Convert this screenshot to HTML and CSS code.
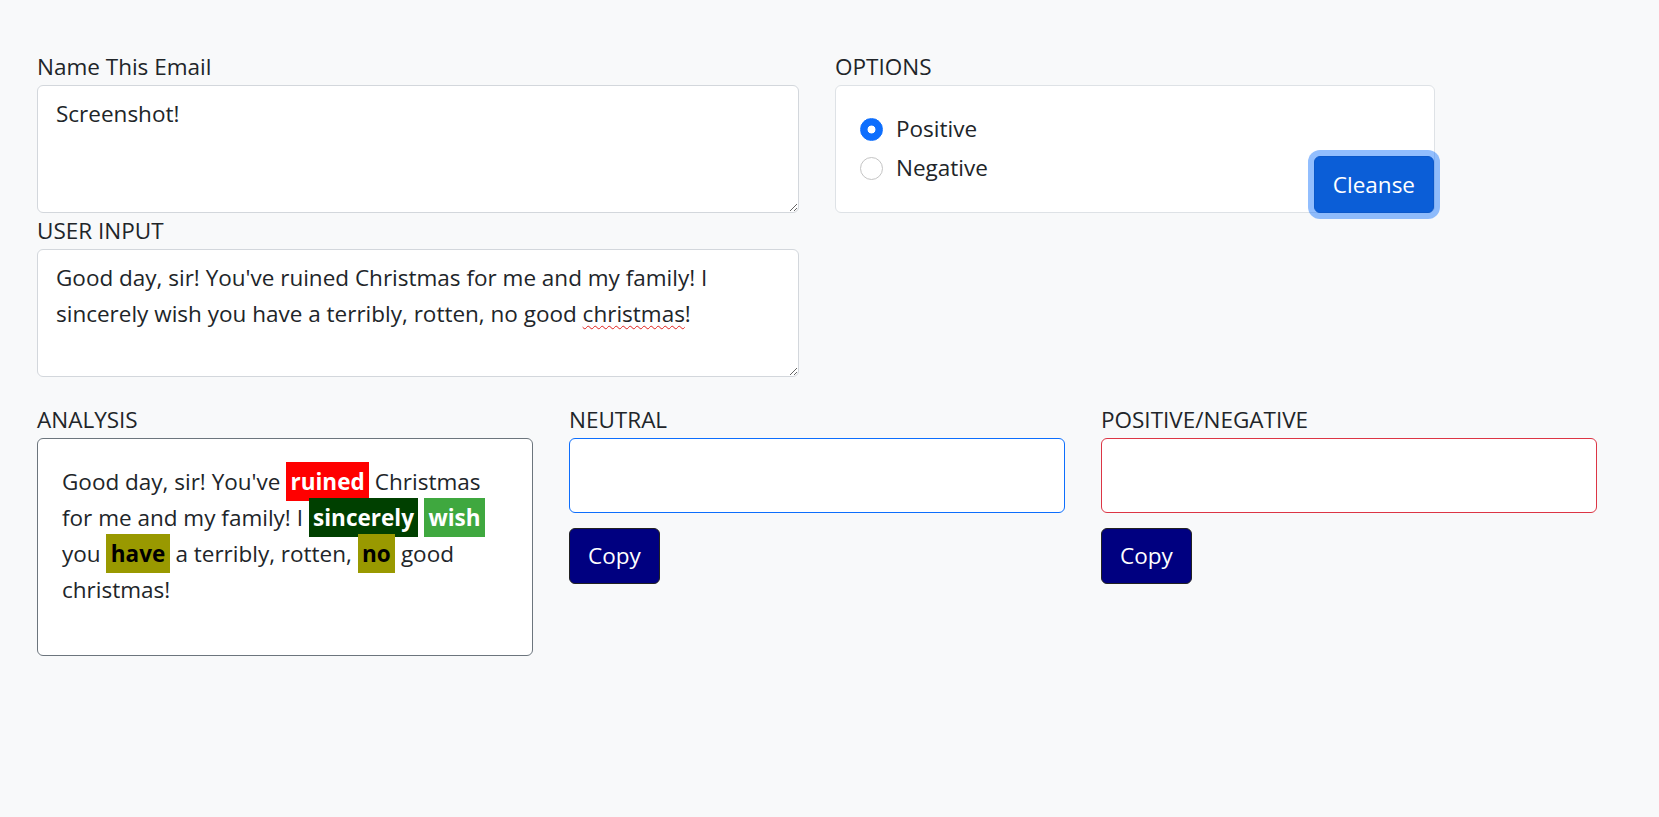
FILE: index.html
```html
<!DOCTYPE html>
<html lang="en">
<head>
<meta charset="utf-8">
<title>Email Cleanser</title>
<link rel="stylesheet" href="styles.css">
</head>
<body>
<main class="page">
  <section class="top-row">
    <div class="col-main">
      <label class="field-label" for="email-name">Name This Email</label>
      <textarea id="email-name" class="text-box" rows="3">Screenshot!</textarea>
      <label class="field-label">USER INPUT</label>
      <div class="text-box text-box-div" role="textbox">Good day, sir! You've ruined Christmas for me and my family! I sincerely wish you have a terribly, rotten, no good <span class="misspelled">christmas</span>!</div>
    </div>
    <div class="col-options">
      <div class="field-label">OPTIONS</div>
      <div class="options-card">
        <label class="radio-row"><span class="radio radio-checked"></span>Positive</label>
        <label class="radio-row"><span class="radio"></span>Negative</label>
        <button class="btn-cleanse" type="button">Cleanse</button>
      </div>
    </div>
  </section>

  <section class="bottom-row">
    <div class="col-third">
      <div class="field-label">ANALYSIS</div>
      <div class="analysis-box">
        <p class="analysis-text">Good day, sir! You've <mark class="hl hl-red">ruined</mark> Christmas for me and my family! I <mark class="hl hl-darkgreen">sincerely</mark> <mark class="hl hl-green">wish</mark> you <mark class="hl hl-olive">have</mark> a terribly, rotten, <mark class="hl hl-olive">no</mark> good christmas!</p>
      </div>
    </div>
    <div class="col-third">
      <div class="field-label">NEUTRAL</div>
      <div class="output-box output-neutral"></div>
      <button class="btn-copy" type="button">Copy</button>
    </div>
    <div class="col-third">
      <div class="field-label">POSITIVE/NEGATIVE</div>
      <div class="output-box output-polar"></div>
      <button class="btn-copy" type="button">Copy</button>
    </div>
  </section>
</main>
</body>
</html>
```

FILE: styles.css
```css
* {
  box-sizing: border-box;
}

html, body {
  margin: 0;
  background: #f8f9fa;
}

body {
  font-family: "Open Sans", "Noto Sans", sans-serif;
  font-size: 22.5px;
  line-height: 36px;
  color: #212529;
}

.page {
  padding: 49px 0 0 37px;
}

.top-row {
  display: flex;
  gap: 36px;
  align-items: flex-start;
}

.col-main {
  width: 762px;
}

.col-options {
  width: 600px;
}

.field-label {
  display: block;
  height: 36px;
  line-height: 36px;
}

.text-box {
  display: block;
  width: 100%;
  height: 128px;
  margin: 0;
  padding: 10px 18px 8px;
  font-family: inherit;
  font-size: 22.5px;
  line-height: 36px;
  color: #212529;
  background: #fff;
  border: 1px solid #d3d7dc;
  border-radius: 6px;
  resize: vertical;
  overflow: auto;
}

.misspelled {
  text-decoration: underline wavy #e0201c;
  text-decoration-thickness: 1px;
  text-underline-offset: 3px;
}

.options-card {
  position: relative;
  height: 128px;
  padding: 25px 24px 24px;
  background: #fff;
  border: 1px solid #dee2e6;
  border-radius: 6px;
}

.radio-row {
  display: flex;
  align-items: flex-start;
  gap: 13px;
  margin-bottom: 3px;
  line-height: 36px;
}

.radio {
  flex: none;
  width: 23px;
  height: 23px;
  margin-top: 6.5px;
  border: 1.5px solid #c4c4c4;
  border-radius: 50%;
  background: #fff;
}

.radio-checked {
  border-color: #0d6efd;
  background: radial-gradient(circle, #fff 0 3.6px, #0d6efd 4.3px);
}

.btn-cleanse {
  position: absolute;
  right: 0;
  bottom: -1px;
  height: 57px;
  padding: 9px 18px;
  font-family: inherit;
  font-size: 22.5px;
  line-height: 36px;
  color: #fff;
  background: #0b5ed7;
  border: 1px solid #0a58ca;
  border-radius: 6px;
  box-shadow: 0 0 0 6px rgba(13, 110, 253, 0.45);
}

.bottom-row {
  display: flex;
  gap: 36px;
  margin-top: 25px;
  align-items: flex-start;
}

.col-third {
  width: 496px;
}

.analysis-box {
  padding: 25px 24px 23px;
  background: #fff;
  border: 1px solid #6c757d;
  border-radius: 6px;
}

.analysis-text {
  margin: 0 0 24px;
  line-height: 36px;
}

.hl {
  padding: 4.3px;
  font-weight: 700;
}

.hl-red {
  background: #ff0000;
  color: #fff;
}

.hl-darkgreen {
  background: #004000;
  color: #fff;
}

.hl-green {
  background: #3fa83f;
  color: #fff;
}

.hl-olive {
  background: #999900;
  color: #000;
}

.output-box {
  height: 75px;
  background: #fff;
  border: 1px solid;
  border-radius: 6px;
}

.output-neutral {
  border-color: #0d6efd;
}

.output-polar {
  border-color: #dc3545;
}

.btn-copy {
  display: block;
  height: 56px;
  margin-top: 15px;
  padding: 9px 18px;
  font-family: inherit;
  font-size: 22.5px;
  line-height: 36px;
  color: #fff;
  background: #000080;
  border: 1px solid #222;
  border-radius: 6px;
}
```
